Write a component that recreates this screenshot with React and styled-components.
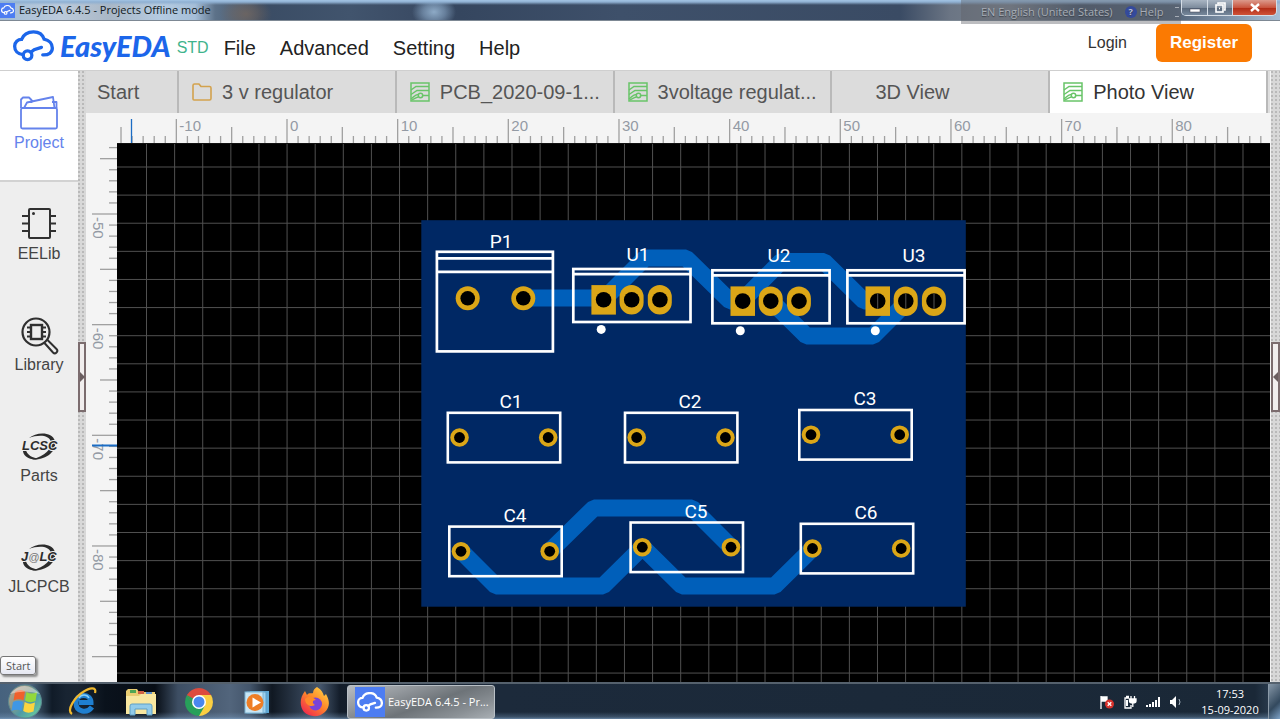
import React, { useLayoutEffect, useRef, useState } from "react";
import styled, { createGlobalStyle, css } from "styled-components";

const GlobalStyle = createGlobalStyle`
  *, *::before, *::after { box-sizing: border-box; }
  body { margin: 0; background: #f3f3f3; font-family: "Liberation Sans", Arial, sans-serif; color: #444; }
  button { font: inherit; color: inherit; border: 0; padding: 0; margin: 0; background: none; cursor: pointer; }
  a { color: inherit; text-decoration: none; }
  svg { display: block; flex: none; }
`;

const systemFont = `"Open Sans", "Noto Sans", sans-serif`;

const Page = styled.div`
  display: flex;
  flex-direction: column;
  min-height: 100vh;
`;

/* ---------- window title bar ---------- */

const TitleBar = styled.header`
  position: relative;
  display: flex;
  align-items: center;
  height: 21px;
  border-bottom: 1px solid #7d8894;
  font-family: ${systemFont};
  background:
    linear-gradient(#a3c4e4 0, #8fb0d2 2px, transparent 5px),
    radial-gradient(ellipse 26px 18px at 246px 14px, #7d6a5caa 0, #7d6a5c66 50%, transparent 100%),
    radial-gradient(ellipse 22px 16px at 434px 12px, #a3c2dfcc 0, #93b2d188 50%, transparent 100%),
    linear-gradient(90deg, #a2bcd6 0, #bccbdc 60px, #a9b7c6 110px, #b5cbe1 160px, #a5bed8 195px, #5d7289 215px, #3a4c64 260px, #41546d 350px, #3b4c65 410px, #35465f 460px, #3e506a 620px, #3a4b64 900px, #6b7584 950px, #7b838e 1010px, #48576b 1080px, #536479 1175px, #a8bfd6 100%);
`;

const WindowTitle = styled.h1`
  display: flex;
  align-items: center;
  gap: 4px;
  margin: 0;
  font-size: 11px;
  line-height: 16px;
  font-weight: 400;
  color: #101820;
`;

const AppBadge = styled.span`
  display: grid;
  place-items: center;
  width: ${(p) => p.$size}px;
  height: ${(p) => p.$size}px;
  background: #4d7df2;
  color: #fff;
`;

const WindowButtons = styled.div`
  display: flex;
  align-self: flex-start;
  margin-left: auto;
  margin-right: 3px;
  border: 1px solid #d5dde6;
  border-top: 0;
  border-radius: 0 0 5px 5px;
  overflow: hidden;
`;

const WindowButton = styled.button`
  display: grid;
  place-items: center;
  width: ${(p) => (p.$close ? 44 : 25)}px;
  height: 15px;
  background: ${(p) =>
    p.$close
      ? "linear-gradient(#dc9a8c, #c9553f 50%, #b02a14 51%, #cf5238)"
      : "linear-gradient(#a9b5c3, #7e8c9d 50%, #566578 51%, #77889b)"};
  & + & { border-left: 1px solid #d5dde6; }
`;

const LanguageBar = styled.div`
  position: absolute;
  top: 0;
  right: 99px;
  z-index: 2;
  display: flex;
  align-items: center;
  gap: 12px;
  width: 220px;
  height: 24px;
  padding-left: 20px;
  background: rgba(96, 98, 104, 0.42);
  color: #a7adb6;
  font-size: 11px;
  line-height: 24px;
  text-shadow: 0 1px 1px #3b4048;
  white-space: nowrap;
`;

const LanguageHelp = styled.span`
  display: flex;
  align-items: center;
  gap: 3px;
`;

const HelpDot = styled.i`
  display: grid;
  place-items: center;
  width: 12px;
  height: 12px;
  border-radius: 50%;
  background: #344a9c;
  color: #b8c0dc;
  font: 700 9px/12px ${systemFont};
`;

/* ---------- application header ---------- */

const Header = styled.div`
  display: flex;
  align-items: center;
  height: 50px;
  padding: 0 28px 0 13px;
  background: #fff;
  border-bottom: 1px solid #cfcfcf;
`;

const Brand = styled.a`
  display: flex;
  align-items: center;
  color: #1c66ea;
`;

const BrandName = styled.span`
  margin-left: 6px;
  font: italic 900 29px/32px Lato, sans-serif;
`;

const Edition = styled.span`
  margin-left: 6px;
  padding-top: 4px;
  font-size: 16px;
  line-height: 20px;
  color: #3fb48d;
`;

const Menu = styled.nav`
  display: flex;
  gap: 24px;
  margin-left: 15px;
  padding-top: 4px;
`;

const MenuButton = styled.button`
  font-size: 20px;
  line-height: 24px;
  color: #222;
`;

const Account = styled.div`
  display: flex;
  align-items: center;
  gap: 29px;
  margin-left: auto;
  padding-bottom: 6px;
`;

const LoginLink = styled.a`
  font-size: 16px;
  line-height: 20px;
  color: #333;
`;

const RegisterButton = styled.button`
  width: 96px;
  height: 38px;
  border-radius: 6px;
  background: #fb7a02;
  color: #fff;
  font-size: 17px;
  font-weight: 700;
`;

/* ---------- work area ---------- */

const Workspace = styled.div`
  display: flex;
  flex: 1;
`;

const Sidebar = styled.aside`
  display: flex;
  flex-direction: column;
  width: 78px;
  background: #eeeeee;
  flex: none;
`;

const SideItem = styled.button`
  display: flex;
  flex-direction: column;
  align-items: center;
  gap: 2px;
  height: 111px;
  padding-top: 24px;
  font-size: 16px;
  line-height: 20px;
  color: ${(p) => (p.$active ? "#6583ec" : "#444")};
  ${(p) => p.$active && css`
    background: #fff;
    box-shadow: inset 0 -2px #d2d2d2;
  `}
`;

const Splitter = styled.div`
  display: flex;
  align-items: center;
  flex: none;
  width: ${(p) => p.$width}px;
  background: radial-gradient(circle at 1px 1px, #b9b9b9 1px, transparent 1px) 0 0 / 4px 4px #d8d8d8;
`;

const SplitterHandle = styled.button`
  display: grid;
  place-items: center;
  width: 100%;
  height: 70px;
  border: 2px solid #7b6c6e;
  background: #f1eeee;
`;

const Editor = styled.main`
  display: flex;
  flex-direction: column;
  flex: 1;
  min-width: 0;
  padding-right: 1px;
  background: #f4f4f4;
`;

const Tabs = styled.div`
  display: flex;
  height: 42px;
  padding-right: 2px;
  background: #dedede;
`;

const Tab = styled.button`
  display: flex;
  align-items: center;
  gap: 10px;
  flex: ${(p) => (p.$home ? "0 0 93px" : "1 1 0")};
  min-width: 0;
  padding-left: ${(p) => (p.$home ? 11 : 13)}px;
  border-right: 2px solid #b9b9b9;
  background: ${(p) => (p.$active ? "#fff" : "#dcdcdc")};
  color: ${(p) => (p.$active ? "#333" : "#555")};
  font-size: 20px;
  line-height: 24px;
  white-space: nowrap;
`;

const TabIcon = styled.span`
  width: 20px;
  height: 20px;
`;

const HorizontalRuler = styled.svg`
  width: 100%;
  height: 31px;
`;

const CanvasRow = styled.div`
  display: flex;
  flex: 1;
`;

const VerticalRuler = styled.svg`
  width: 31px;
  min-height: 538px;
  height: auto;
`;

const Canvas = styled.svg`
  && { flex: 1; }
  width: 0;
  min-width: 0;
  height: auto;
  min-height: 538px;
  background: #000;
`;

const RulerText = styled.text`
  font: 15px "Liberation Sans", Arial, sans-serif;
  fill: #939aa4;
`;

const Silk = styled.text`
  font: 19px Roboto, sans-serif;
  fill: #fff;
  text-anchor: middle;
`;

/* ---------- taskbar ---------- */

const Taskbar = styled.footer`
  position: relative;
  display: flex;
  align-items: center;
  height: 37px;
  border-top: 2px solid #55616d;
  font-family: ${systemFont};
  color: #fff;
  background:
    linear-gradient(transparent 28px, #7fa3c855 33px, #8db1d6aa 100%),
    linear-gradient(90deg, #46627e 0, #4d6880 30px, #101b28 52px, #182432 66px, #1a2532 78px, #0a121c 105px, #070d15 155px, #3d4e63 178px, #52657c 230px, #43556b 250px, #101822 272px, #2a3748 296px, #45566c 320px, #131d2a 340px, #1c2a3b 500px, #1a2837 1255px, #33475c 100%);
`;

const LaunchButton = styled.button`
  display: grid;
  place-items: center;
  width: ${(p) => (p.$start ? 54 : 58)}px;
  padding-right: ${(p) => (p.$start ? 4 : 0)}px;
  height: 35px;
`;

const RunningApp = styled.button`
  display: flex;
  align-items: center;
  gap: 3px;
  width: 148px;
  height: 34px;
  margin-left: 3px;
  padding-left: 7px;
  border: 1px solid #b9c0c6;
  border-radius: 3px;
  background: linear-gradient(160deg, #b9bdc1 0, #91969b 30%, #6d7378 55%, #8a9095 80%, #a9afb4 100%);
  font-size: 11px;
  line-height: 16px;
  white-space: nowrap;
`;

const Tray = styled.div`
  display: flex;
  align-items: center;
  gap: 9px;
  margin-left: auto;
`;

const Clock = styled.div`
  display: flex;
  flex-direction: column;
  align-items: center;
  width: 76px;
  font-size: 11px;
  line-height: 16px;
`;

const ShowDesktop = styled.button`
  width: 12px;
  height: 35px;
  border-left: 1px solid #8b9aa8;
  background: linear-gradient(135deg, #8596a6, #33495e 60%, #7ea3c8);
`;

const Tooltip = styled.div`
  position: absolute;
  left: 0;
  bottom: 44px;
  padding: 0 5px;
  border: 1px solid #767676;
  border-radius: 3px;
  background: linear-gradient(#fff, #e6e8f2);
  box-shadow: 2px 2px 2px #0006;
  color: #555;
  font-size: 11px;
  line-height: 17px;
`;

/* ---------- drawings ---------- */

const CloudLogo = ({ width, height, weight = 10 }) => (
  <svg width={width} height={height} viewBox="0 0 124 96" fill="none" stroke="currentColor" strokeWidth={weight} strokeLinecap="round" aria-hidden="true">
    <path d="M30 74C14 73 5 62 5 49C5 36 15 28 26 28C32 12 46 5 62 5C79 5 90 14 94 27C110 30 119 42 119 54C119 68 108 76 90 75" />
    <circle cx="44" cy="76" r="13" />
    <path d="M54 67L64 59L86 52" />
  </svg>
);

const ProjectIcon = () => (
  <svg width="40" height="36" viewBox="0 0 40 36" fill="none" stroke="#6583ec" strokeWidth="1.8" strokeLinejoin="round">
    <path d="M2 13V4.500L4 2.500H10L12.500 5V8M5 13L8 7.500L34 2L35.500 13M33 7H37.500V13" />
    <rect x="2" y="13" width="36" height="20.500" rx="1.500" />
  </svg>
);

const ChipIcon = () => (
  <svg width="40" height="36" viewBox="0 0 40 36" fill="none" stroke="#303030" strokeWidth="2">
    <rect x="10" y="3" width="21" height="29" rx="1" />
    <path d="M3 10H10M3 17.500H10M3 25H10M31 10H37M31 17.500H37M31 25H37" />
    <circle cx="14.500" cy="7.500" r="1.500" fill="#303030" stroke="none" />
  </svg>
);

const LibraryIcon = () => (
  <svg width="40" height="40" viewBox="0 0 40 40" fill="none" stroke="#303030" strokeWidth="2">
    <circle cx="17" cy="15" r="13.500" strokeWidth="2.200" />
    <rect x="12" y="8" width="11" height="14" strokeWidth="2.400" />
    <path d="M8 10.500H12M8 15H12M8 19.500H12M23 10.500H27M23 15H27M23 19.500H27" strokeWidth="1.800" />
    <path d="M25.500 26L34 35.500A2.400 2.400 0 0 0 37.500 32L28.500 23" />
  </svg>
);

const SwooshIcon = ({ children }) => (
  <svg width="40" height="36" viewBox="0 0 40 36" fill="#2c2c2c">
    <path d="M10 10C17 4 33 3 36 13C38 23 28 32 13 31.500C26 28 33 21 32 14C30 6 18 7 10 10Z" />
    <path d="M4 21C3 28 11 33 21 31C13 30 8 27 6.500 21Z" />
    {children}
  </svg>
);

const SwooshText = styled.text`
  font: italic 700 13px "Liberation Sans", Arial, sans-serif;
  stroke: #eeeeee;
  stroke-width: 2px;
  paint-order: stroke;
`;

const SmallAt = styled.tspan`
  font-size: 11px;
  font-weight: 400;
  fill: #777;
`;

const BoardIcon = () => (
  <svg width="20" height="20" viewBox="0 0 20 20" fill="none" stroke="#68c468" strokeWidth="1.500">
    <rect x="1" y="1" width="18" height="18" />
    <path d="M1 8L6 4.500H19M1 12.500L7 8.500H19M1 17C4 15 5 12.500 8 12.500M12.500 13.500H19M2 18C5 16 7 15.500 8 15" />
    <circle cx="10.500" cy="13.500" r="2.200" />
  </svg>
);

const FolderIcon = () => (
  <svg width="20" height="20" viewBox="0 0 20 20" fill="none" stroke="#d3a24e" strokeWidth="1.600" strokeLinejoin="round">
    <path d="M1 17V3.500Q1 2 2.500 2H7L9 4.500H17.500Q19 4.500 19 6V16.500Q19 18 17.500 18H2Q1 18 1 17Z" />
  </svg>
);

const Arrow = ({ left }) => (
  <svg width="5" height="10" viewBox="0 0 5 10" fill="#6a5d5f">
    <path d={left ? "M5 0V10L0 5Z" : "M0 0V10L5 5Z"} />
  </svg>
);

const StartOrb = () => (
  <svg width="38" height="35" viewBox="0 0 38 35">
    <defs>
      <linearGradient id="orb" x1="0" y1="0" x2="1" y2="1">
        <stop offset="0" stopColor="#c9a08c" />
        <stop offset=".35" stopColor="#8f9a88" />
        <stop offset=".6" stopColor="#4f9aa6" />
        <stop offset="1" stopColor="#6fdc9c" />
      </linearGradient>
    </defs>
    <circle cx="19" cy="17.500" r="16.500" fill="url(#orb)" stroke="#5d8a90" />
    <path d="M9 8Q14 4.500 19 7.500L17.500 16.500Q13 14 7.500 16.500Z" fill="#f0602c" />
    <path d="M20.500 8Q25.500 11 31 8L29.500 17Q24 19.500 19 16.500Z" fill="#93d83c" />
    <path d="M7 18Q12 15.500 17 18L15.500 27Q11 24.500 5.500 27Z" fill="#3f97e4" />
    <path d="M18.700 18Q24 21 29 18.500L27.500 27.500Q22 30 17.200 27Z" fill="#fbd43f" />
    <path d="M4 10Q18 -6 34 10Q19 5 4 10Z" fill="#fff" opacity=".4" />
  </svg>
);

const ExplorerE = () => (
  <svg width="32" height="32" viewBox="0 0 32 32" fill="none">
    <path d="M25 21C20 28 9 26 9 17C9 7 24 7 24 16.500H12" stroke="#1f7fd0" strokeWidth="5" />
    <path d="M22 12C20 8 14 8 12 12" stroke="#8bd0f8" strokeWidth="1.500" />
    <path d="M5 28C-1 24 8 11 16 6C22 2 30 0 28 7" stroke="#f0b82e" strokeWidth="2.200" />
  </svg>
);

const FoldersIcon = () => (
  <svg width="32" height="30" viewBox="0 0 32 30">
    <path d="M1 4L3 2H12L14 5H30V27H1Z" fill="#e9cd72" />
    <path d="M5 3H11V6H5Z" fill="#4fa654" />
    <path d="M13 4H19V7H13Z" fill="#d06244" />
    <path d="M21 5H27V8H21Z" fill="#5d90c9" />
    <path d="M1 9H14L16 7H31V27H1Z" fill="#f8e7a0" />
    <path d="M5 28V19Q5 17 7 17H25Q27 17 27 19V28H22V22H10V28Z" fill="#91cbea" stroke="#5f9fc5" />
  </svg>
);

const ChromeIcon = () => (
  <svg width="30" height="30" viewBox="0 0 30 30">
    <path d="M15 15L2.900 8A14 14 0 0 1 27.100 8Z" fill="#dd4b3e" />
    <path d="M15 15L27.100 8A14 14 0 0 1 15 29Z" fill="#fbcf42" />
    <path d="M15 15L15 29A14 14 0 0 1 2.900 8Z" fill="#27a05a" />
    <path d="M15 8H27.100L21 18.500Z" fill="#fbcf42" />
    <path d="M9 18.500L2.900 8L15 8Z" fill="#dd4b3e" />
    <path d="M9 11.500L2.900 8L9 18.500Z" fill="#27a05a" />
    <path d="M9 18.500L21 18.500L15 29Z" fill="#27a05a" />
    <circle cx="15" cy="15" r="7" fill="#fff" />
    <circle cx="15" cy="15" r="5.500" fill="#4a87ee" />
  </svg>
);

const MediaIcon = () => (
  <svg width="26" height="26" viewBox="0 0 26 26">
    <rect x="6" y="2" width="19" height="22" fill="#5fa9d6" />
    <rect x="3" y="3" width="19" height="21" fill="#9bd0ee" stroke="#5f9fc8" />
    <rect x="1" y="3" width="18" height="21" fill="#c8e6f5" stroke="#7fb4d2" />
    <circle cx="11" cy="13.500" r="8.500" fill="#ee7e26" />
    <path d="M8.500 8.500V18.500L17 13.500Z" fill="#fff" />
  </svg>
);

const FirefoxIcon = () => (
  <svg width="30" height="32" viewBox="0 0 30 32">
    <defs>
      <linearGradient id="fox" x1="1" y1="0" x2=".2" y2="1">
        <stop offset="0" stopColor="#ffe14a" />
        <stop offset=".5" stopColor="#ff8a2a" />
        <stop offset="1" stopColor="#f0264f" />
      </linearGradient>
    </defs>
    <path d="M17 1C22 4 23 7 24 10L26 8C30 15 30 21 25 26C19 32 9 31 4 26C-1 20 0 11 5 5L7 9C9 6 12 8 13 7C13 4 15 2 17 1Z" fill="url(#fox)" />
    <circle cx="15.500" cy="18" r="6.500" fill="#7a43d8" />
    <path d="M5 13C9 9 13 11 16 14C12 14 12 17 15 19C10 22 5 18 5 13Z" fill="#ff8a2a" />
  </svg>
);

const TrayFlag = () => (
  <svg width="14" height="14" viewBox="0 0 14 14">
    <path d="M1 1V14M2 2H7V6H2Z" stroke="#fff" strokeWidth="1.300" fill="#fff" />
    <circle cx="9.500" cy="9" r="4.500" fill="#d8322c" />
    <path d="M7.700 7.200L11.300 10.800M11.300 7.200L7.700 10.800" stroke="#fff" strokeWidth="1.300" />
  </svg>
);

const TrayPower = () => (
  <svg width="14" height="14" viewBox="0 0 14 14" fill="none" stroke="#fff" strokeWidth="1.300">
    <path d="M6 3H2V13H8V10M3 1.500H6" />
    <path d="M4 5V11" strokeWidth="2" />
    <path d="M8 1V4M11.500 1V4M6.500 4H13V6Q13 8 9.800 8Q6.500 8 6.500 6ZM9.800 8V12" fill="#fff" />
  </svg>
);

const TraySignal = () => (
  <svg width="14" height="14" viewBox="0 0 14 14" fill="#fff">
    <path d="M0 10H2V12H0ZM3 9H5V12H3ZM6 7H8V12H6ZM9 5H11V12H9ZM12 2H14V12H12Z" />
  </svg>
);

const TraySpeaker = () => (
  <svg width="14" height="14" viewBox="0 0 14 14" fill="#fff">
    <path d="M1 5H3L7 1V13L3 9H1Z" />
    <path d="M10 4Q12 7 10 10" fill="none" stroke="#aab8c4" />
  </svg>
);

/* ---------- rulers and grid ---------- */

const UNIT = 11.066;
const GRID = 28.115;
const ORIGIN_X = 201;
const range = (from, to) => Array.from({ length: to - from + 1 }, (_, i) => from + i);

function useWidth() {
  const ref = useRef(null);
  const [width, setWidth] = useState(0);
  useLayoutEffect(() => {
    const measure = () => setWidth(ref.current.getBoundingClientRect().width);
    measure();
    window.addEventListener("resize", measure);
    return () => window.removeEventListener("resize", measure);
  }, []);
  return [ref, width];
}

const TopRuler = () => {
  const [ref, width] = useWidth();
  const last = Math.max(0, Math.floor((width - ORIGIN_X) / UNIT));
  return (
    <HorizontalRuler ref={ref} aria-label="Horizontal ruler">
      {range(-15, last).map((n) => {
        const x = ORIGIN_X + n * UNIT;
        const top = n % 10 === 0 ? 6 : n % 5 === 0 ? 14 : 23;
        return (
          <g key={n}>
            <line x1={x} x2={x} y1={top} y2="30" stroke="#a0a0a0" strokeWidth="1.300" />
            {n % 10 === 0 && <RulerText x={x + 3} y="18">{n}</RulerText>}
          </g>
        );
      })}
      <line x1="31" x2="100%" y1="30.500" y2="30.500" stroke="#111" />
      <line x1="45.500" x2="45.500" y1="6" y2="30" stroke="#1b6cc4" strokeWidth="1.300" />
    </HorizontalRuler>
  );
};

const LeftRuler = () => (
  <VerticalRuler aria-label="Vertical ruler">
    {range(44, 90).map((n) => {
      const y = 70 + (n - 50) * UNIT;
      const left = n % 10 === 0 ? 6 : n % 5 === 0 ? 14 : 23;
      return (
        <g key={n}>
          <line x1={left} x2="31" y1={y} y2={y} stroke="#a0a0a0" strokeWidth="1.300" />
          {n % 10 === 0 && n < 90 && (
            <RulerText transform={`translate(7 ${y + 3}) rotate(90)`}>{-n}</RulerText>
          )}
        </g>
      );
    })}
    <line x1="6" x2="31" y1="301.500" y2="301.500" stroke="#1b6cc4" strokeWidth="2" />
  </VerticalRuler>
);

/* ---------- circuit board ---------- */

const GOLD = "#dba617";

const Pad = ({ x, y, r, hole }) => (
  <>
    <circle cx={x} cy={y} r={r} fill={GOLD} />
    <circle cx={x} cy={y} r={hole} fill="#000" />
  </>
);

const Regulator = ({ x, y, name, labelX, labelY, see }) => (
  <>
    <g transform={`translate(${x} ${y})`}>
      <rect x="1.400" y="1.400" width="117.200" height="53" fill="none" stroke="#fff" strokeWidth="2.700" />
      <line x1="1" x2="119" y1="6.500" y2="6.500" stroke="#fff" strokeWidth="2.700" />
      <rect x="19.500" y="17.500" width="24.500" height="29.500" fill={GOLD} />
      <rect x="47.700" y="17.500" width="24" height="29.500" rx="12" fill={GOLD} />
      <rect x="75.900" y="17.500" width="24" height="29.500" rx="12" fill={GOLD} />
      {[31.700, 59.800, 88].map((cx) => (
        <g key={cx}>
          <circle cx={cx} cy="32.200" r="7.800" fill="#000" />
          {see && <line x1={cx} x2={cx} y1="24.500" y2="40" stroke="#555" />}
        </g>
      ))}
      <circle cx="29.300" cy="61.800" r="4.500" fill="#fff" />
    </g>
    <Silk x={labelX} y={labelY}>{name}</Silk>
  </>
);

const Capacitor = ({ x, y, name, labelX, labelY }) => (
  <>
    <g transform={`translate(${x} ${y})`}>
      <rect x="1.300" y="1.300" width="112.400" height="49.600" fill="none" stroke="#fff" strokeWidth="2.600" />
      <Pad x={13} y={26} r={9.300} hole={5.400} />
      <Pad x={101.700} y={26} r={9.300} hole={5.400} />
    </g>
    <Silk x={labelX} y={labelY}>{name}</Silk>
  </>
);

const traces = [
  "M523 298H603",
  "M603 300L645 258H686L730 301H742",
  "M742 301L781 261.500H824L864 301H877",
  "M771 301L806.500 336H873L908 301",
  "M550 551L594 508H692L731 547",
  "M461 551L496 586H603L642.500 547L682 586H774.500L812 549",
];

const regulators = [
  { name: "U1", x: 571.900, y: 267.600, labelX: 638, labelY: 261 },
  { name: "U2", x: 711, y: 268.900, labelX: 779, labelY: 262 },
  { name: "U3", x: 846, y: 268.900, labelX: 914, labelY: 262, see: true },
];

const capacitors = [
  { name: "C1", x: 446.500, y: 411.500, labelX: 511, labelY: 408 },
  { name: "C2", x: 623.700, y: 411.500, labelX: 690, labelY: 408 },
  { name: "C3", x: 798, y: 408.700, labelX: 865, labelY: 405 },
  { name: "C4", x: 448, y: 525.300, labelX: 515, labelY: 522 },
  { name: "C5", x: 629.300, y: 521.200, labelX: 696, labelY: 518 },
  { name: "C6", x: 799.500, y: 522.500, labelX: 866, labelY: 519 },
];

const PhotoView = () => (
  <Canvas role="img" aria-label="Board photo view">
    {range(0, 90).map((n) => (
      <line key={`v${n}`} x1={29.500 + n * GRID} x2={29.500 + n * GRID} y1="0" y2="100%" stroke="#505050" />
    ))}
    {range(0, 60).map((n) => (
      <line key={`h${n}`} y1={23 + n * GRID} y2={23 + n * GRID} x1="0" x2="100%" stroke="#505050" />
    ))}
    <g transform="translate(-117 -144)">
      <rect x="421.300" y="220.200" width="544.500" height="386.500" fill="#002864" />
      {traces.map((d) => (
        <path key={d} d={d} fill="none" stroke="#005fba" strokeWidth="17" strokeLinejoin="bevel" strokeLinecap="round" />
      ))}
      <rect x="436.900" y="251.800" width="116" height="99.600" fill="none" stroke="#fff" strokeWidth="2.700" />
      <path d="M436 258.300H554M436 271.800H554" stroke="#fff" strokeWidth="2.700" />
      <Pad x={467.700} y={298.300} r={12} hole={7.300} />
      <Pad x={523.300} y={298.300} r={12} hole={7.300} />
      <Silk x="501" y="248">P1</Silk>
      {regulators.map((part) => <Regulator key={part.name} {...part} />)}
      {capacitors.map((part) => <Capacitor key={part.name} {...part} />)}
    </g>
  </Canvas>
);

/* ---------- page ---------- */

const sideItems = [
  { label: "Project", icon: <ProjectIcon />, active: true },
  { label: "EELib", icon: <ChipIcon /> },
  { label: "Library", icon: <LibraryIcon /> },
  { label: "Parts", icon: <SwooshIcon><SwooshText x="3" y="22">LCSC</SwooshText></SwooshIcon> },
  { label: "JLCPCB", icon: <SwooshIcon><SwooshText x="2" y="22">J<SmallAt>@</SmallAt>LC</SwooshText></SwooshIcon> },
];

const IconBox = styled.span`
  display: grid;
  place-items: center;
  width: 40px;
  height: 36px;
`;

const tabs = [
  { label: "Start", home: true },
  { label: "3 v regulator", icon: <FolderIcon /> },
  { label: "PCB_2020-09-1...", icon: <BoardIcon /> },
  { label: "3voltage regulat...", icon: <BoardIcon /> },
  { label: "3D View" },
  { label: "Photo View", icon: <BoardIcon />, active: true },
];

const launchers = [
  ["Internet Explorer", <ExplorerE />],
  ["Explorer", <FoldersIcon />],
  ["Chrome", <ChromeIcon />],
  ["Media Player", <MediaIcon />],
  ["Firefox", <FirefoxIcon />],
];

export default function App() {
  return (
    <Page>
      <GlobalStyle />
      <TitleBar>
        <WindowTitle>
          <AppBadge $size={15}><CloudLogo width={13} height={10} weight={11} /></AppBadge>
          EasyEDA 6.4.5 - Projects Offline mode
        </WindowTitle>
        <WindowButtons>
          <WindowButton aria-label="Minimize">
            <svg width="12" height="10" viewBox="0 0 12 10"><rect x="1" y="6" width="10" height="3" fill="#fff" stroke="#445" strokeWidth=".5" /></svg>
          </WindowButton>
          <WindowButton aria-label="Restore">
            <svg width="11" height="11" viewBox="0 0 11 11" fill="none" stroke="#fff" strokeWidth="1.600"><path d="M3 2V1H10V8H9" /><rect x="1" y="3" width="7" height="7" /><path d="M4 6.500H5" /></svg>
          </WindowButton>
          <WindowButton $close aria-label="Close">
            <svg width="10" height="9" viewBox="0 0 10 9" stroke="#fff" strokeWidth="2.400"><path d="M1 1L9 8M9 1L1 8" /></svg>
          </WindowButton>
        </WindowButtons>
        <LanguageBar>
          <span>EN English (United States)</span>
          <LanguageHelp><HelpDot>?</HelpDot>Help</LanguageHelp>
          <svg width="5" height="14" viewBox="0 0 5 14" stroke="#a7adb6"><path d="M0 2.500H4M0 11.500H4" /></svg>
        </LanguageBar>
      </TitleBar>

      <Header>
        <Brand href="#">
          <CloudLogo width={41} height={32} />
          <BrandName>EasyEDA</BrandName>
          <Edition>STD</Edition>
        </Brand>
        <Menu>
          {["File", "Advanced", "Setting", "Help"].map((m) => <MenuButton key={m}>{m}</MenuButton>)}
        </Menu>
        <Account>
          <LoginLink href="#">Login</LoginLink>
          <RegisterButton>Register</RegisterButton>
        </Account>
      </Header>

      <Workspace>
        <Sidebar>
          {sideItems.map((item) => (
            <SideItem key={item.label} $active={item.active}>
              <IconBox>{item.icon}</IconBox>
              {item.label}
            </SideItem>
          ))}
        </Sidebar>
        <Splitter $width={8}>
          <SplitterHandle aria-label="Collapse left panel"><Arrow /></SplitterHandle>
        </Splitter>
        <Editor>
          <Tabs>
            {tabs.map((tab) => (
              <Tab key={tab.label} $home={tab.home} $active={tab.active}>
                {!tab.home && <TabIcon>{tab.icon}</TabIcon>}
                {tab.label}
              </Tab>
            ))}
          </Tabs>
          <TopRuler />
          <CanvasRow>
            <LeftRuler />
            <PhotoView />
          </CanvasRow>
        </Editor>
        <Splitter $width={9}>
          <SplitterHandle aria-label="Collapse right panel"><Arrow left /></SplitterHandle>
        </Splitter>
      </Workspace>

      <Taskbar>
        <Tooltip role="tooltip">Start</Tooltip>
        <LaunchButton $start aria-label="Start menu"><StartOrb /></LaunchButton>
        {launchers.map(([name, icon]) => (
          <LaunchButton key={name} aria-label={name}>{icon}</LaunchButton>
        ))}
        <RunningApp>
          <AppBadge $size={30}><CloudLogo width={26} height={20} weight={11} /></AppBadge>
          EasyEDA 6.4.5 - Pr...
        </RunningApp>
        <Tray>
          <TrayFlag />
          <TrayPower />
          <TraySignal />
          <TraySpeaker />
          <Clock>
            <span>17:53</span>
            <span>15-09-2020</span>
          </Clock>
        </Tray>
        <ShowDesktop aria-label="Show desktop" />
      </Taskbar>
    </Page>
  );
}
